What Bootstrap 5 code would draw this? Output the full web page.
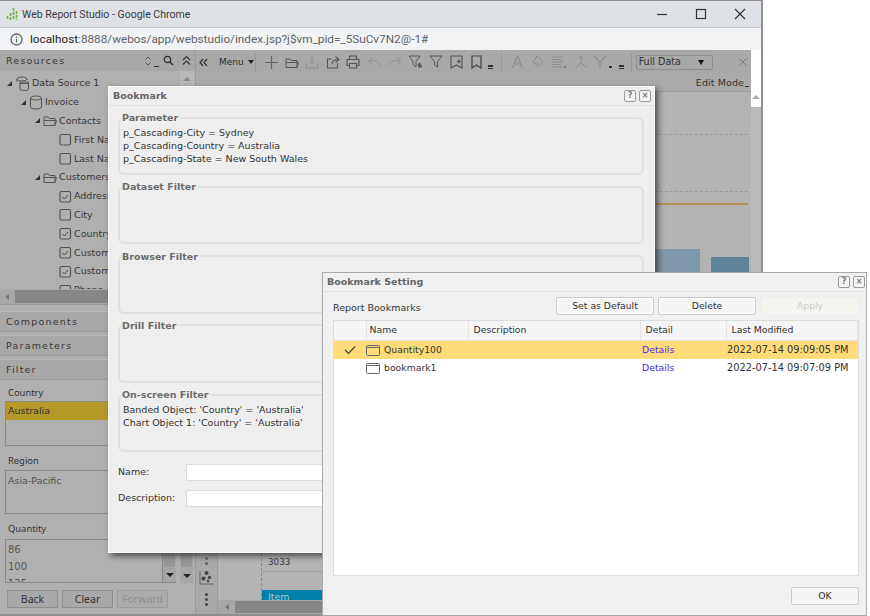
<!DOCTYPE html>
<html lang="en">
<head>
<meta charset="utf-8">
<title>Web Report Studio</title>
<link href="https://cdn.jsdelivr.net/npm/bootstrap@5.3.0/dist/css/bootstrap.min.css" rel="stylesheet">
<style>
html,body{margin:0;height:100%;background:#fff;overflow:hidden}
body{font-family:"DejaVu Sans",sans-serif;font-size:9.5px;color:#383838;line-height:12px}
svg{display:block;flex:none}
.chromewin{position:absolute;left:0;top:0;width:763px;height:616px;border:solid #8f8f8f;border-width:1px 2px 2px 0;display:flex;flex-direction:column;overflow:hidden;background:#b0b0b0}
.titlebar{height:26px;background:#dee1e6;font:10.55px Roboto,sans-serif;color:#3c3c3c;padding-left:6px;gap:4px;flex:none}
.wbtns{margin-left:auto;gap:23px;padding-right:13px}
.addrbar{height:23px;background:#f1f3f4;border-top:1px solid #c6c8cb;font:11.76px Roboto,sans-serif;color:#5f6368;padding-left:10px;gap:7px;flex:none}
.addrbar b{font-weight:400;color:#1f1f1f}
.appbody{flex:1;display:flex;min-height:0;background:#b0b0b0}
.leftpane{width:196px;flex:none;border-right:1px solid #999;display:flex;flex-direction:column;background:#b0b0b0}
.phead{height:21px;background:#a8a8a8;letter-spacing:1.2px;padding-left:6px;flex:none}
.treebox{height:218px;overflow:hidden;position:relative;flex:none;padding-top:3px}
.trow{height:18.8px;gap:2px;white-space:nowrap}
.tw{width:0;height:0;border-left:5px solid transparent;border-bottom:5px solid #333;margin-right:1px;flex:none}
.l0{padding-left:7px}.l1{padding-left:21px}.l2{padding-left:35px}.l3{padding-left:59px}
.treescroll{position:absolute;right:1px;top:0;width:14px;height:18px;background:#b8b8b8}
.tri-u{width:0;height:0;border:4px solid transparent;border-top:0;border-bottom:4px solid #888;margin:6px auto 0}
.hscroll{height:15px;background:#a8a8a8;flex:none;padding-left:5px}
.tri-l{width:0;height:0;border:3.5px solid transparent;border-left:0;border-right:4px solid #777;flex:none}
.hthumb{height:13px;background:#878787;margin-left:6px;flex:1}
.sectgap{height:7px;flex:none;border-top:1px solid #999}
.sect{height:21px;background:#a8a8a8;letter-spacing:1.2px;padding-left:6px;border-top:1px solid #bbb;border-bottom:1px solid #999;margin-bottom:3px;flex:none}
.filterbody{flex:1;padding:0 2px 0 5px;display:flex;flex-direction:column;min-height:0}
.flabel{height:14px;margin-top:2px;margin-bottom:1px;padding-left:3px;font:9.4px "Noto Sans",sans-serif;color:#333;line-height:14px;flex:none}
.lbox{border:1px solid #8a8a8a;flex:none;margin-right:16px;padding:3px 0 0;color:#555;overflow:hidden}
.lbox div{padding-left:2px;height:17px;line-height:14px}
.lbox.nopad{padding-top:0}
.lbox .pick{background:#b59a28;color:#333;height:18px;line-height:18px}
.fbtns{gap:4px;margin-top:7px;padding-left:2px;flex:none}
.fbtn{width:51px;height:18px;background:#a8a8a8;border:1px solid #8f8f8f;font:10.5px "Noto Sans",sans-serif;text-align:center;line-height:16px;color:#333}
.fbtn.off{color:#8f8f8f;border-color:#9c9c9c;background:#acacac}
.listwrap{height:44px;overflow:hidden;display:flex;flex:none}
.listwrap .lbox{margin-right:0;flex:1;font-size:10px}
.vs{width:13px;background:#a6a6a6;position:relative;flex:none;border-bottom:1px solid #8a8a8a}
.vs::before{content:"";position:absolute;top:0;left:1px;right:1px;height:28px;background:#979797}
.vs i{position:absolute;bottom:5px;left:3px;width:0;height:0;border:4px solid transparent;border-bottom:0;border-top:4px solid #222}
.vs2{margin-left:4px;border-bottom:0}
.mainpane{flex:1;display:flex;min-width:0}
.maincol{flex:1;display:flex;flex-direction:column;min-width:0}
.toolbar{height:24px;padding-left:3px;color:#2e2e2e;flex:none;background:#a9a9a9}
.tb-i{width:20.6px;display:flex;justify-content:center;flex:none}
.sep{width:1px;height:18px;background:#989898;margin:0 5px;flex:none}
.tinydd{width:5px;height:4px;border-bottom:1px solid #333;border-top:2px solid #333;flex:none}
.fulldata{width:77px;height:15px;border:1px solid #8d8d8d;border-radius:2px;background:#a8a8a8;padding:0 2px;color:#333;flex:none;font-size:9.6px}
.fulldata i{margin-left:auto;margin-right:6px;width:0;height:0;border:3.5px solid transparent;border-bottom:0;border-top:5px solid #111}
.edit{height:18px;justify-content:flex-end;padding-right:2px;color:#333;flex:none;border-bottom:1px solid #9c9c9c;letter-spacing:.1px;background:#aaa}
.stage{flex:1;display:flex;min-height:0}
.vstrip{width:22px;flex:none;display:flex;flex-direction:column;align-items:center;justify-content:flex-end;background:#a9a9a9;padding-bottom:8px;border-right:1px solid #9c9c9c}
.dots{width:3px;height:3px;border-radius:50%;background:#444;box-shadow:0 5px 0 #444,0 10px 0 #444}
.canvas{flex:1;position:relative;overflow:hidden;background:#b3b3b3}
.cmk{position:absolute}
.railside{width:10px;flex:none;background:#bbb;display:flex;flex-direction:column}
.railtop{height:57px;background:#fff;flex:none;padding-top:45px}
.railtop .tri-u{border-bottom-color:#aaa;margin-top:0}
.dlg{position:absolute;background:#eee;display:flex;flex-direction:column}
.dlg1{left:108px;top:86px;width:547px;height:467px;border:1px solid #fdfdfd;box-shadow:3px 3px 6px rgba(40,40,40,.75)}
.dlg2{left:322px;top:272px;width:545px;height:344px;border:1px solid #a9a9a9;background:#f0f0f0}
.dhead{height:19px;flex:none;padding:0 3px 0 4px;border-bottom:1px solid #e0e0e0;color:#666;font-weight:700;font-size:9.5px}
.dlg2 .dhead{padding-right:1px}
.qbox{width:12px;height:12px;border:1px solid #999;border-radius:2px;margin-left:3px;flex:none;color:#777;font-size:8px;line-height:10px;text-align:center;background:#f4f4f4}
.dbody{padding:6px 10px 0 9px;flex:1;min-height:0}
.fset{border:2px solid #e0e0e0;border-radius:6px;height:63px;margin:0 0 6.25px;padding:0 4px;min-width:0}
.fset legend{float:none;width:auto;font-size:9.5px;font-weight:700;color:#6c6c6c;margin:0 0 0 -2px;padding:0 2px 0 0;line-height:11px;height:11px}
.fset div{line-height:12.9px;color:#333;margin:4px 0 0 -1px}
.frow{height:18px;margin-bottom:8px;color:#333}
.frow:first-of-type{margin-top:11px}
.frow span{width:67px}
.finput{flex:1;height:17px;background:#fff;border:1px solid #dcdcdc;margin-right:-4px;margin-left:1px}
.toprow{height:25px;padding:0 7px 0 10px;margin-top:1px}
.toprow>span{margin-top:5px}
.sbtn{width:98px;height:18px;border:1px solid #c9c9c9;border-radius:2px;background:#f5f5f5;text-align:center;line-height:16px;margin-left:4px;color:#333;font-size:9.3px;box-shadow:inset 0 0 0 1px #fff}
.sbtn.dis{background:#f5f5ef;color:#ccc;border-color:#eee;margin-left:5px;box-shadow:none}
.gridbox{margin:2px 7px 0 10px;height:256px;background:#fff;border:1px solid #dcdcdc}
.gtable{width:100%;table-layout:fixed;font-size:9.3px;margin:0;border-collapse:collapse}
.gtable th,.gtable td{font-weight:400;padding:0 0 0 2px;white-space:nowrap;overflow:hidden;color:#333}
.gtable th{height:19.5px;background:#f5f5f5;border-right:1px solid #e4e4e4;border-bottom:1px solid #e4e4e4;padding-bottom:2px}
.gtable th.nmh{padding-left:3px}
.gtable th:nth-child(n+3){padding-left:5px}
.gtable td{height:18.5px;background:#fff}
.gtable td.nm{padding-left:0}
.gtable td.stamp{font-size:9.8px;padding-left:1px}
.gtable tr.hit td{background:#ffdb7a}
.gtable a{color:#4f2bea;text-decoration:none}
.okrow{padding:11px 7px 0 0;justify-content:flex-end}
.okbtn{width:68px;height:18px;border:1px solid #c9c9c9;border-radius:2px;background:#f5f5f5;text-align:center;line-height:16px;color:#333;font-size:9.3px}
</style>
</head>
<body>
<svg width="0" height="0" class="position-absolute">
<defs>
<symbol id="doc" viewBox="0 0 13 13"><rect x="1" y="1.5" width="10.5" height="10.5" rx="1.5" fill="none" stroke="#555" stroke-width="1.2"/></symbol>
<symbol id="chk" viewBox="0 0 13 13"><rect x="1" y="1.5" width="10.5" height="10.5" rx="1.5" fill="none" stroke="#555" stroke-width="1.2"/><path d="M3.5 7l2 2 3.5-4" fill="none" stroke="#444"/></symbol>
<symbol id="fold" viewBox="0 0 14 13"><path d="M1 11.5V3h4l1.500 1.500H12V11.500zM1 6.500h12.500L12 11.500" fill="none" stroke="#555"/></symbol>
<symbol id="db" viewBox="0 0 14 15"><ellipse cx="7" cy="3" rx="5.500" ry="2" fill="none" stroke="#555"/><path d="M1.500 3v9c0 1.200 2.500 2 5.500 2s5.500-.8 5.500-2V3" fill="none" stroke="#555"/></symbol>
<symbol id="dbs" viewBox="0 0 15 15"><ellipse cx="7" cy="3" rx="5" ry="2" fill="none" stroke="#555"/><path d="M2 3v3M12 3v1M5 6h8.500v7c0 .8-1.800 1.500-4.200 1.500S5 13.800 5 13zM5 7.500h8.500" fill="none" stroke="#555"/></symbol>
<symbol id="bmk" viewBox="0 0 14 13"><rect x=".5" y="1.500" width="13" height="10" rx="1" fill="none" stroke="#666"/><path d="M.5 3.500h13" stroke="#666"/></symbol>
</defs>
</svg>

<div class="chromewin">
  <div class="titlebar d-flex align-items-center">
    <svg width="12" height="15" viewBox="0 0 12 15"><path d="M1.500 9v4M4.500 6v7M7.500 1v12M10.500 4v9" stroke="#6fae3c" stroke-width="1.600" stroke-dasharray="3 1"/></svg>
    <span>Web Report Studio - Google Chrome</span>
    <div class="wbtns d-flex align-items-center">
      <svg width="16" height="16" viewBox="0 0 16 16"><path d="M3 8.500h10" stroke="#333" stroke-width="1.200"/></svg>
      <svg width="16" height="16" viewBox="0 0 16 16"><rect x="3.500" y="3.500" width="9" height="9" fill="none" stroke="#333" stroke-width="1.200"/></svg>
      <svg width="16" height="16" viewBox="0 0 16 16"><path d="M3 3l10 10M13 3L3 13" stroke="#333" stroke-width="1.200"/></svg>
    </div>
  </div>
  <div class="addrbar d-flex align-items-center">
    <svg width="13" height="13" viewBox="0 0 13 13"><circle cx="6.500" cy="6.500" r="5.500" fill="none" stroke="#5f6368" stroke-width="1.300"/><path d="M6.500 5.800v3.700M6.500 3.300v1.300" stroke="#5f6368" stroke-width="1.300"/></svg>
    <span><b>localhost</b>:8888/webos/app/webstudio/index.jsp?j$vm_pid=_5SuCv7N2@-1#</span>
  </div>
  <div class="appbody">
    <div class="leftpane">
      <div class="phead d-flex align-items-center">Resources
        <svg class="ms-auto" width="12" height="12" viewBox="0 0 12 12"><path d="M3.500 4.500L6 2l2.500 2.500M3.500 7.500L6 10l2.500-2.500" fill="none" stroke="#555"/></svg>
        <div class="tinydd" style="border-top-width:0;margin-top:8px"></div>
        <svg class="ms-1" width="11" height="11" viewBox="0 0 11 11"><circle cx="4.500" cy="4.500" r="3.200" fill="none" stroke="#333" stroke-width="1.300"/><path d="M7 7l3 3" stroke="#333" stroke-width="1.500"/></svg>
        <svg class="ms-2 me-1" width="9" height="11" viewBox="0 0 9 11"><path d="M1 5l3.500-3.500L8 5M1 9.500L4.500 6 8 9.500" fill="none" stroke="#333" stroke-width="1.200"/></svg>
      </div>
      <div class="treebox">
        <div class="trow l0 d-flex align-items-center"><i class="tw"></i><svg width="15" height="15"><use href="#dbs"/></svg><span>Data Source 1</span></div>
        <div class="trow l1 d-flex align-items-center"><i class="tw"></i><svg width="14" height="15"><use href="#db"/></svg><span>Invoice</span></div>
        <div class="trow l2 d-flex align-items-center"><i class="tw"></i><svg width="14" height="13"><use href="#fold"/></svg><span>Contacts</span></div>
        <div class="trow l3 d-flex align-items-center"><svg width="13" height="13"><use href="#doc"/></svg><span>First Name</span></div>
        <div class="trow l3 d-flex align-items-center"><svg width="13" height="13"><use href="#doc"/></svg><span>Last Name</span></div>
        <div class="trow l2 d-flex align-items-center"><i class="tw"></i><svg width="14" height="13"><use href="#fold"/></svg><span>Customers</span></div>
        <div class="trow l3 d-flex align-items-center"><svg width="13" height="13"><use href="#chk"/></svg><span>Address</span></div>
        <div class="trow l3 d-flex align-items-center"><svg width="13" height="13"><use href="#doc"/></svg><span>City</span></div>
        <div class="trow l3 d-flex align-items-center"><svg width="13" height="13"><use href="#chk"/></svg><span>Country</span></div>
        <div class="trow l3 d-flex align-items-center"><svg width="13" height="13"><use href="#chk"/></svg><span>Customer</span></div>
        <div class="trow l3 d-flex align-items-center"><svg width="13" height="13"><use href="#chk"/></svg><span>Customer</span></div>
        <div class="trow l3 d-flex align-items-center"><svg width="13" height="13"><use href="#chk"/></svg><span>Phone</span></div>
        <div class="treescroll"><div class="tri-u"></div></div>
      </div>
      <div class="hscroll d-flex align-items-center"><i class="tri-l"></i><div class="hthumb"></div></div>
      <div class="sectgap"></div>
      <div class="sect d-flex align-items-center">Components</div>
      <div class="sect d-flex align-items-center">Parameters</div>
      <div class="sect d-flex align-items-center" style="margin-bottom:0">Filter</div>
      <div class="filterbody">
        <div class="flabel" style="margin-top:6px">Country</div>
        <div class="lbox nopad" style="height:45px"><div class="pick">Australia</div></div>
        <div class="flabel" style="margin-top:8px;margin-bottom:2px">Region</div>
        <div class="lbox" style="height:44px"><div>Asia-Pacific</div></div>
        <div class="flabel" style="margin-top:8px;margin-bottom:3px">Quantity</div>
        <div class="listwrap">
          <div class="lbox"><div>86</div><div>100</div><div>125</div></div>
          <div class="vs"><i></i></div>
          <div class="vs vs2"><i></i></div>
        </div>
        <div class="fbtns d-flex"><div class="fbtn">Back</div><div class="fbtn">Clear</div><div class="fbtn off">Forward</div></div>
      </div>
    </div>
    <div class="mainpane">
      <div class="maincol">
      <div class="toolbar d-flex align-items-center">
        <svg width="9" height="11" viewBox="0 0 9 11"><path d="M4 2L1 5.500 4 9M8 2L5 5.500 8 9" fill="none" stroke="#333" stroke-width="1.200"/></svg>
        <span style="margin:0 4px 0 11px;font-size:9px">Menu</span><i class="tw" style="border-left:3px solid transparent;border-right:3px solid transparent;border-bottom:0;border-top:4px solid #222"></i>
        <div class="sep" style="margin-left:0"></div>
        <div class="tb-i"><svg width="15" height="15" viewBox="0 0 15 15"><path d="M7.500 1v13M1 7.500h13" stroke="#666" stroke-width="1.200"/></svg></div>
        <div class="tb-i"><svg width="14" height="13"><use href="#fold"/></svg></div>
        <div class="tb-i"><svg width="14" height="14" viewBox="0 0 14 14"><path d="M1 8v5h12V8M7 1v8M4 6l3 3 3-3" fill="none" stroke="#8d8d8d"/></svg></div>
        <div class="tb-i"><svg width="14" height="14" viewBox="0 0 14 14"><path d="M11.500 8v5h-10V4h4M6 9c0-3 2-4.500 6-4.500M9.500 1.500l3.500 3-3.500 3" fill="none" stroke="#555" stroke-width="1.100"/></svg></div>
        <div class="tb-i"><svg width="14" height="14" viewBox="0 0 14 14"><path d="M3.500 4V1h7v3M3.500 10.500H1V4.500h12v6h-2.500M3.500 8.500h7V13h-7z" fill="none" stroke="#555" stroke-width="1.100"/></svg></div>
        <div class="tb-i"><svg width="14" height="12" viewBox="0 0 14 12"><path d="M13 9.500C12 5 8 4 1.500 5M5 1.500L1.500 5 5 8.500" fill="none" stroke="#8d8d8d"/></svg></div>
        <div class="tb-i"><svg width="14" height="12" viewBox="0 0 14 12"><path d="M1 9.500C2 5 6 4 12.500 5M9 1.500L12.500 5 9 8.500" fill="none" stroke="#8d8d8d"/></svg></div>
        <div class="tb-i"><svg width="15" height="14" viewBox="0 0 15 14"><path d="M1 1h11L8 6.500V12L5 9.500V6.500z" fill="none" stroke="#555"/><path d="M11.500 8v5M13.500 9h-3.500v1.500h3.500V12h-3.500" fill="none" stroke="#444" stroke-width=".8"/></svg></div>
        <div class="tb-i"><svg width="14" height="14" viewBox="0 0 14 14"><path d="M1 1h12L8.500 6.500V12L5.500 10V6.500z" fill="none" stroke="#555"/></svg></div>
        <div class="tb-i"><svg width="13" height="14" viewBox="0 0 13 14"><path d="M1 1h11v12l-5.500-3L1 13zM9 4.500v4M7 6.500h4" fill="none" stroke="#555" stroke-width="1.100"/></svg></div>
        <div class="tb-i"><svg width="13" height="14" viewBox="0 0 13 14"><path d="M2 1h9v12l-4.500-3L2 13z" fill="none" stroke="#444" stroke-width="1.200"/></svg></div>
        <div class="tinydd" style="margin:9px 0 0 1px"></div>
        <div class="sep" style="margin-left:8px"></div>
        <div class="tb-i"><svg width="13" height="14" viewBox="0 0 13 14"><path d="M1.500 13L6.500 1l5 12M3.500 9h6" fill="none" stroke="#8d8d8d" stroke-width="1.100"/></svg></div>
        <div class="tb-i"><svg width="14" height="14" viewBox="0 0 14 14"><path d="M6 1l6 6-4.500 5L2 7.500z" fill="none" stroke="#8d8d8d"/><path d="M3 8l5 0-2 3z" fill="#999"/></svg></div>
        <div class="tb-i"><svg width="15" height="12" viewBox="0 0 15 12"><path d="M1 1h11M1 3.500h9M1 6h11M1 8.500h9M1 11h11" stroke="#8d8d8d"/><path d="M13 10h2v1.500h-2z" fill="#666"/></svg></div>
        <div class="tb-i" style="margin-left:2px"><svg width="14" height="14" viewBox="0 0 14 14"><path d="M1 13l6-5 6 5M7 8V1M4.500 3.500L7 1l2.500 2.500" fill="none" stroke="#8d8d8d"/></svg></div>
        <div class="tb-i" style="width:17px"><svg width="14" height="14" viewBox="0 0 14 14"><path d="M1 1l6 6 6-6M7 7v6" fill="none" stroke="#8d8d8d" stroke-width="1.100"/></svg></div>
        <div class="tinydd" style="width:3px;height:2px;border-top-width:0;border-bottom-width:2px;margin-top:10px"></div>
        <div class="tinydd" style="margin:9px 0 0 7px"></div>
        <div class="sep" style="margin:0 4px 0 7px"></div>
        <div class="fulldata d-flex align-items-center">Full Data<i></i></div>
        <svg class="ms-auto" style="margin-right:3px" width="10" height="10" viewBox="0 0 10 10"><path d="M1.500 1.500l7 7M8.500 1.500l-7 7" stroke="#7c7c7c"/></svg>
      </div>
      <div class="edit d-flex align-items-center">Edit Mode<span class="tinydd" style="border-top-width:0;height:2px;width:4px;margin:7px 0 0 1px"></span></div>
      <div class="stage">
        <div class="vstrip">
          <div class="dots" style="background:#666;box-shadow:0 5px 0 #666;margin-bottom:10px"></div>
          <svg width="15" height="15" viewBox="0 0 15 15" style="margin-bottom:8px"><circle cx="7.500" cy="3" r="2" fill="#444"/><circle cx="4.500" cy="8.500" r="2" fill="#444"/><circle cx="10.500" cy="7.500" r="1.700" fill="#444"/><circle cx="9" cy="11" r="1.300" fill="#444"/><path d="M1 1v13h13.500" fill="none" stroke="#666"/></svg>
          <div class="dots" style="margin-bottom:10px"></div>
        </div>
        <div class="canvas">
          <div class="cmk" style="left:0;right:3px;top:42px;border-top:1px dashed #999"></div>
          <div class="cmk" style="left:0;right:3px;top:99px;border-top:1px dashed #999"></div>
          <div class="cmk" style="left:0;right:3px;top:111px;border-top:2px solid #b58f5b"></div>
          <div class="cmk" style="left:437px;width:45px;top:157px;height:60px;background:#7f99ab"></div>
          <div class="cmk" style="left:493px;width:38px;top:165px;height:60px;background:#5f8399"></div>
          <div class="cmk" style="left:43px;top:461px;height:48px;border-left:1px dashed #b5803f"></div>
          <div class="cmk" style="left:50px;top:464px;font-size:8.8px">3033</div>
          <div class="cmk" style="left:44px;top:479px;width:300px;border-top:1px solid #9c9c9c"></div>
          <div class="cmk" style="left:44px;top:498px;width:300px;height:10px;background:#0080a8;color:#9fc8d4;padding-left:6px;line-height:14px;overflow:hidden">Item</div>
          <div class="cmk d-flex align-items-center" style="left:0;right:0;bottom:0;height:14px;background:#a8a8a8;padding-left:7px"><i class="tri-l"></i><div class="hthumb" style="height:12px"></div></div>
        </div>
      </div>
      </div>
      <div class="railside"><div class="railtop"><div class="tri-u"></div></div></div>
    </div>
  </div>
</div>

<div class="dlg dlg1">
  <div class="dhead d-flex align-items-center"><span>Bookmark</span><div class="qbox ms-auto">?</div><div class="qbox">&#215;</div></div>
  <div class="dbody">
    <fieldset class="fset"><legend>Parameter</legend><div>p_Cascading-City = Sydney<br>p_Cascading-Country = Australia<br>p_Cascading-State = New South Wales</div></fieldset>
    <fieldset class="fset"><legend>Dataset Filter</legend></fieldset>
    <fieldset class="fset"><legend>Browser Filter</legend></fieldset>
    <fieldset class="fset"><legend>Drill Filter</legend></fieldset>
    <fieldset class="fset"><legend>On-screen Filter</legend><div>Banded Object: 'Country' = 'Australia'<br>Chart Object 1: 'Country' = 'Australia'</div></fieldset>
    <div class="frow d-flex align-items-center"><span>Name:</span><div class="finput"></div></div>
    <div class="frow d-flex align-items-center"><span>Description:</span><div class="finput"></div></div>
  </div>
</div>

<div class="dlg dlg2">
  <div class="dhead d-flex align-items-center"><span>Bookmark Setting</span><div class="qbox ms-auto">?</div><div class="qbox">&#215;</div></div>
  <div class="toprow d-flex align-items-center"><span>Report Bookmarks</span><div class="sbtn ms-auto">Set as Default</div><div class="sbtn">Delete</div><div class="sbtn dis">Apply</div></div>
  <div class="gridbox">
    <table class="gtable">
      <colgroup><col style="width:32px"><col style="width:102px"><col style="width:172px"><col style="width:86px"><col></colgroup>
      <tr><th></th><th class="nmh">Name</th><th>Description</th><th>Detail</th><th>Last Modified</th></tr>
      <tr class="hit"><td><svg class="ms-2" width="12" height="10" viewBox="0 0 12 10"><path d="M1 5l3.500 3.500L11 1.500" fill="none" stroke="#444" stroke-width="1.200"/></svg></td><td class="nm"><span class="d-flex align-items-center gap-1"><svg width="14" height="13"><use href="#bmk"/></svg>Quantity100</span></td><td></td><td><a href="#">Details</a></td><td class="stamp">2022-07-14 09:09:05 PM</td></tr>
      <tr><td></td><td class="nm"><span class="d-flex align-items-center gap-1"><svg width="14" height="13"><use href="#bmk"/></svg>bookmark1</span></td><td></td><td><a href="#">Details</a></td><td class="stamp">2022-07-14 09:07:09 PM</td></tr>
    </table>
  </div>
  <div class="okrow d-flex"><div class="okbtn">OK</div></div>
</div>
<script src="https://cdn.jsdelivr.net/npm/bootstrap@5.3.0/dist/js/bootstrap.bundle.min.js"></script>
</body>
</html>
